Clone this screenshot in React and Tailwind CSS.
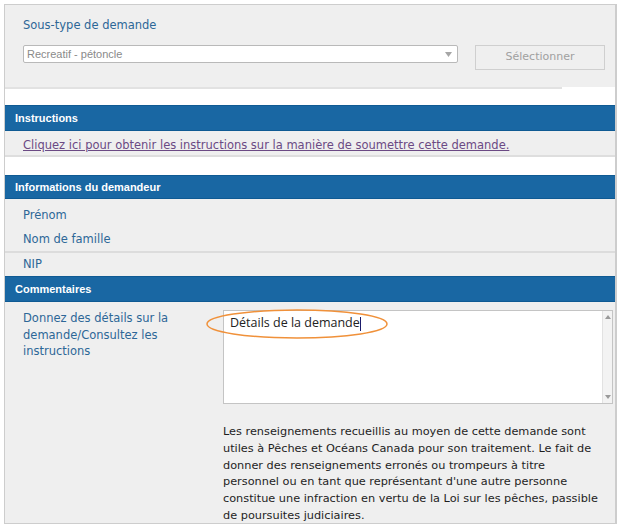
import React from "react";

function SectionHeader({ title, className = "" }) {
  return (
    <div className={"shrink-0 bg-[#1967a3] border-y border-[#0f5a93] text-white font-bold font-[Liberation_Sans] text-[11px] pl-[10px] flex items-center " + className}>
      {title}
    </div>
  );
}

export default function App() {
  return (
    <div className="w-[624px] h-[530px] bg-white pl-[4px] pt-[4px] font-[DejaVu_Sans]">
      <div className="w-[613px] h-[520px] border-l border-t border-b border-r-2 border-[#cdcdcd] bg-white overflow-hidden flex flex-col">
        {/* sous-type */}
        <div className="shrink-0 bg-[#efefef] h-[82px] pl-[18px] pr-[8px] pt-[13px]">
          <p className="text-[#2d6797] text-[11.5px] leading-[14px]">Sous-type de demande</p>
          <div className="mt-[13px] flex items-start">
            <div className="w-[435px] shrink-0 h-[18px] bg-white border border-[#b9b9b9] rounded-[2px] flex items-center justify-between pl-[3px] pr-[5px]">
              <span className="font-[Liberation_Sans] text-[11px] text-[#8a8a8a]">Recreatif - pétoncle</span>
              <svg width="7" height="5" viewBox="0 0 7 5">
                <path d="M0 0 L7 0 L3.5 5 Z" fill="#a6a6a6" />
              </svg>
            </div>
            <button type="button" className="ml-[17px] shrink-0 w-[130px] h-[25px] border border-[#cfcfcf] bg-[#efefef] text-[#a0a0a0] text-[11px]">
              Sélectionner
            </button>
          </div>
        </div>
        <div className="shrink-0 h-[18px] bg-white">
          <div className="h-[2px] w-[557px] bg-[#e2e2e2]"></div>
        </div>

        {/* instructions */}
        <SectionHeader title="Instructions" className="h-[26px]" />
        <div className="shrink-0 h-[26px] bg-[#efefef] border-b-2 border-[#dedede] pl-[18px] flex items-center pt-[5px]">
          <a className="text-[#6b4a84] underline text-[11.5px]" href="#">
            Cliquez ici pour obtenir les instructions sur la manière de soumettre cette demande.
          </a>
        </div>
        <div className="shrink-0 h-[18px] bg-white"></div>

        {/* demandeur */}
        <SectionHeader title="Informations du demandeur" className="h-[24px]" />
        <div className="shrink-0 bg-[#efefef] text-[#2d6797] text-[11.5px] pl-[18px]">
          <div className="h-[28px] flex items-center pt-[5px]">Prénom</div>
          <div className="h-[24px] flex items-center pt-[2px]">Nom de famille</div>
        </div>
        <div className="shrink-0 h-[2px] bg-[#dcdcdc]"></div>
        <div className="shrink-0 h-[23px] bg-[#efefef] text-[#2d6797] text-[11.5px] pl-[18px] flex items-center pt-[1px]">NIP</div>

        {/* commentaires */}
        <SectionHeader title="Commentaires" className="h-[26px]" />
        <div className="flex-1 min-h-0 overflow-hidden bg-[#efefef] flex pt-[8px]">
          <div className="w-[218px] shrink-0 pl-[18px] pr-[14px] text-[#2d6797] text-[11.5px] leading-[16.5px]">
            Donnez des détails sur la demande/Consultez les instructions
          </div>
          <div className="flex-1">
            <div className="relative w-[390px] h-[94px] bg-white border border-[#c4c4c4] flex">
              <div className="flex-1 pl-[6px] pt-[3px] font-[Open_Sans] text-[12.5px] text-[#222]">
                Détails de la demande<span className="inline-block w-[1px] h-[14px] bg-[#1b1b6b] align-middle"></span>
              </div>
              <div className="w-[10px] h-full bg-[#f3f3f3] border-l border-[#e2e2e2] flex flex-col justify-between items-center py-[4px]">
                <svg width="6" height="4" viewBox="0 0 6 4"><path d="M0 4 L6 4 L3 0 Z" fill="#9a9a9a" /></svg>
                <svg width="6" height="4" viewBox="0 0 6 4"><path d="M0 0 L6 0 L3 4 Z" fill="#9a9a9a" /></svg>
              </div>
              <svg className="absolute left-[-19px] top-[-3px]" width="185" height="32" viewBox="0 0 185 32">
                <ellipse cx="92" cy="16" rx="90" ry="14" fill="none" stroke="#f0913a" strokeWidth="1.5" />
              </svg>
            </div>
            <p className="mt-[20px] w-[392px] text-[11.3px] leading-[16.8px] text-[#1e1e1e]">
              Les renseignements recueillis au moyen de cette demande sont<br />
              utiles à Pêches et Océans Canada pour son traitement. Le fait de<br />
              donner des renseignements erronés ou trompeurs à titre<br />
              personnel ou en tant que représentant d'une autre personne<br />
              constitue une infraction en vertu de la Loi sur les pêches, passible<br />
              de poursuites judiciaires.
            </p>
          </div>
        </div>
      </div>
    </div>
  );
}
